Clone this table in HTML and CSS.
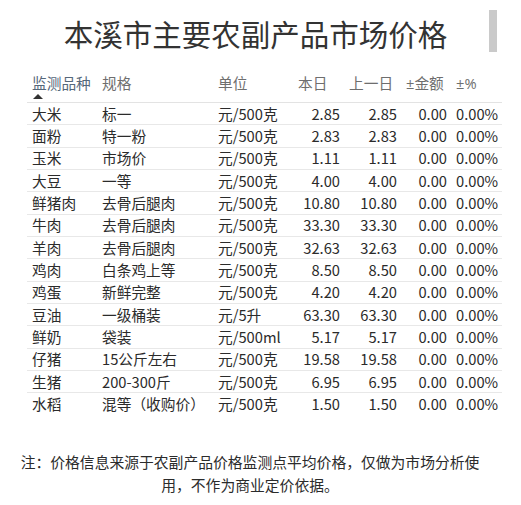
FILE: index.html
```html
<!DOCTYPE html>
<html lang="zh-CN">
<head>
<meta charset="utf-8">
<title>本溪市主要农副产品市场价格</title>
<link rel="stylesheet" href="styles.css">
</head>
<body>
<div class="page">
  <h1 class="title">本溪市主要农副产品市场价格</h1>
  <div class="scroll-thumb"></div>
  <table class="prices">
    <colgroup>
      <col class="c1"><col class="c2"><col class="c3"><col class="c4"><col class="c5"><col class="c6"><col class="c7">
    </colgroup>
    <thead>
      <tr>
        <th class="sorted">监测品种<span class="arrow"></span></th>
        <th>规格</th>
        <th>单位</th>
        <th>本日</th>
        <th>上一日</th>
        <th>±金额</th>
        <th>±%</th>
      </tr>
    </thead>
    <tbody>
      <tr><td>大米</td><td>标一</td><td>元/500克</td><td class="n">2.85</td><td class="n">2.85</td><td class="n">0.00</td><td class="n">0.00%</td></tr>
      <tr><td>面粉</td><td>特一粉</td><td>元/500克</td><td class="n">2.83</td><td class="n">2.83</td><td class="n">0.00</td><td class="n">0.00%</td></tr>
      <tr><td>玉米</td><td>市场价</td><td>元/500克</td><td class="n">1.11</td><td class="n">1.11</td><td class="n">0.00</td><td class="n">0.00%</td></tr>
      <tr><td>大豆</td><td>一等</td><td>元/500克</td><td class="n">4.00</td><td class="n">4.00</td><td class="n">0.00</td><td class="n">0.00%</td></tr>
      <tr><td>鲜猪肉</td><td>去骨后腿肉</td><td>元/500克</td><td class="n">10.80</td><td class="n">10.80</td><td class="n">0.00</td><td class="n">0.00%</td></tr>
      <tr><td>牛肉</td><td>去骨后腿肉</td><td>元/500克</td><td class="n">33.30</td><td class="n">33.30</td><td class="n">0.00</td><td class="n">0.00%</td></tr>
      <tr><td>羊肉</td><td>去骨后腿肉</td><td>元/500克</td><td class="n">32.63</td><td class="n">32.63</td><td class="n">0.00</td><td class="n">0.00%</td></tr>
      <tr><td>鸡肉</td><td>白条鸡上等</td><td>元/500克</td><td class="n">8.50</td><td class="n">8.50</td><td class="n">0.00</td><td class="n">0.00%</td></tr>
      <tr><td>鸡蛋</td><td>新鲜完整</td><td>元/500克</td><td class="n">4.20</td><td class="n">4.20</td><td class="n">0.00</td><td class="n">0.00%</td></tr>
      <tr><td>豆油</td><td>一级桶装</td><td>元/5升</td><td class="n">63.30</td><td class="n">63.30</td><td class="n">0.00</td><td class="n">0.00%</td></tr>
      <tr><td>鲜奶</td><td>袋装</td><td>元/500ml</td><td class="n">5.17</td><td class="n">5.17</td><td class="n">0.00</td><td class="n">0.00%</td></tr>
      <tr><td>仔猪</td><td>15公斤左右</td><td>元/500克</td><td class="n">19.58</td><td class="n">19.58</td><td class="n">0.00</td><td class="n">0.00%</td></tr>
      <tr><td>生猪</td><td>200-300斤</td><td>元/500克</td><td class="n">6.95</td><td class="n">6.95</td><td class="n">0.00</td><td class="n">0.00%</td></tr>
      <tr><td>水稻</td><td>混等（收购价）</td><td>元/500克</td><td class="n">1.50</td><td class="n">1.50</td><td class="n">0.00</td><td class="n">0.00%</td></tr>
    </tbody>
  </table>
  <p class="note">注：价格信息来源于农副产品价格监测点平均价格，仅做为市场分析使<br>用，不作为商业定价依据。</p>
</div>
</body>
</html>
```

FILE: styles.css
```css
html, body {
  margin: 0;
  padding: 0;
  background: #ffffff;
}

body {
  font-family: "Noto Sans CJK SC", "Noto Sans", sans-serif;
  color: #2b2b2b;
  font-size: 14.7px;
}

.page {
  position: relative;
  width: 521px;
  height: 505px;
  overflow: hidden;
}

.title {
  margin: 0;
  padding: 0 10px 0 0;
  height: 70px;
  line-height: 66px;
  text-align: center;
  font-weight: 400;
  font-size: 29.5px;
  color: #333333;
}

.scroll-thumb {
  position: absolute;
  left: 489px;
  top: 10px;
  width: 8px;
  height: 42px;
  background: #cacaca;
}

.prices {
  margin-left: 27px;
  width: 475px;
  border-collapse: collapse;
  table-layout: fixed;
}

.c1 { width: 70px; }
.c2 { width: 116px; }
.c3 { width: 80px; }
.c4 { width: 51px; }
.c5 { width: 57px; }
.c6 { width: 50px; }
.c7 { width: 51px; }

.prices th {
  height: 32px;
  padding: 0 0 0 5px;
  text-align: left;
  font-family: "Open Sans", "Noto Sans CJK SC", sans-serif;
  font-weight: 400;
  color: #6e6e6e;
  vertical-align: top;
  line-height: 26px;
  white-space: nowrap;
  border-bottom: 1px solid #e3e3e3;
}

.prices th.sorted {
  position: relative;
  color: #55677a;
}

.arrow {
  position: absolute;
  left: 6px;
  top: 24px;
  width: 0;
  height: 0;
  border-left: 5px solid transparent;
  border-right: 5px solid transparent;
  border-bottom: 5px solid #333333;
}

.prices td {
  height: 21.33px;
  padding: 0 4px 0 5px;
  line-height: 20px;
  white-space: nowrap;
  color: #2b2b2b;
  vertical-align: middle;
}

.prices tbody tr + tr td {
  border-top: 1px solid #e8e8e8;
}

.prices td.n {
  text-align: right;
}

.note {
  margin: 35px 0 0 0;
  padding: 0 21px 0 0;
  text-align: center;
  line-height: 23px;
  font-size: 14.8px;
  color: #2b2b2b;
  white-space: nowrap;
}
```
